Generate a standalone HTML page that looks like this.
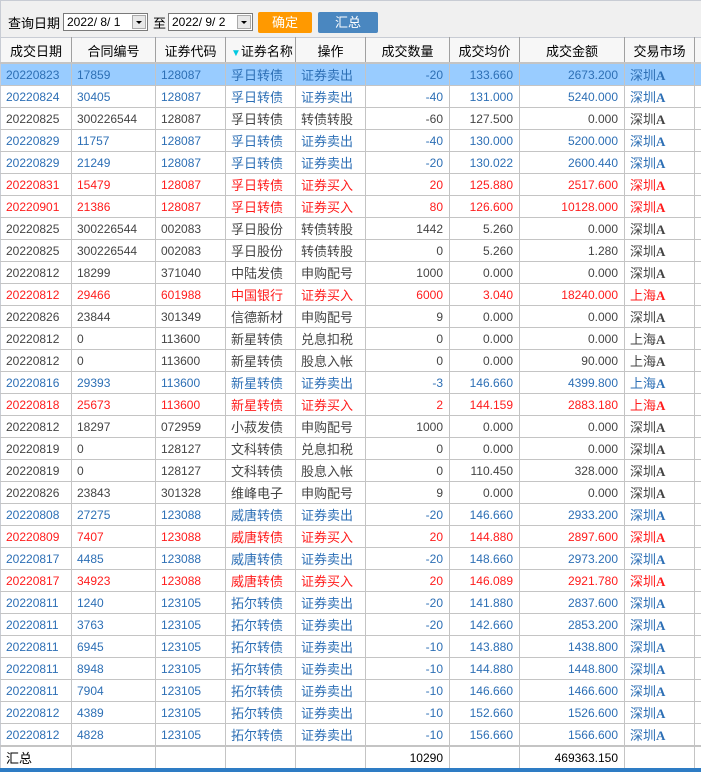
<!DOCTYPE html>
<html><head><meta charset="utf-8"><style>
body{margin:0;width:701px;height:772px;overflow:hidden;background:#fff;font-family:"Liberation Sans","Noto Sans CJK SC",sans-serif;position:relative}
.top{position:absolute;left:0;top:0;width:701px;height:37px;background:#f0f0f0;border-top:1px solid #c8ccd4;border-left:1px solid #c8ccd4;box-sizing:border-box}
.lbl{position:absolute;top:12px;font-size:13px;color:#000}
.combo{position:absolute;top:12px;height:18px;width:85px;border:1px solid #7a7a7a;background:#fff;box-sizing:border-box;font-size:12px;line-height:16px;padding-left:3px;color:#000}
.combo b{position:absolute;right:1px;top:1px;width:14px;height:14px;background:#e8e8e8;border:1px solid #aaa;box-sizing:border-box}
.combo b:after{content:"";position:absolute;left:3px;top:5px;border-left:3px solid transparent;border-right:3px solid transparent;border-top:3px solid #000}
.btn{position:absolute;top:11px;height:21px;color:#fff;font-size:13px;text-align:center;line-height:21px;border-radius:2px}
table{position:absolute;left:0;top:37px;border-collapse:collapse;table-layout:fixed;width:701px}
td,th{height:21px;border:1px solid #c4c4c4;padding:0 5px;white-space:nowrap;overflow:hidden;font-size:12px;font-weight:normal}
th{height:24px;background:#f7f7f7;font-size:13px;color:#000;border-color:#a0a0a0;border-top:1px solid #c8ccd4;border-bottom:2px solid #c4c4c4}
td.c{font-size:13px}
td.r{text-align:right;padding-right:6px}
tr.b td{color:#2d6fb5}tr.k td{color:#444}tr.d td{color:#ff1c1c}
tr.s td{background:#99ccff}
td:first-child,th:first-child{border-left:1px solid #c8ccd4}
.m b{font-family:"Liberation Serif",serif;font-weight:bold}
.bot{position:absolute;left:0;top:768px;width:701px;height:4px;background:#2e7cc4}
</style></head><body>
<div class="top">
<span class="lbl" style="left:7px">查询日期</span>
<div class="combo" style="left:62px">2022/ 8/ 1<b></b></div>
<span class="lbl" style="left:152px">至</span>
<div class="combo" style="left:167px">2022/ 9/ 2<b></b></div>
<div class="btn" style="left:257px;width:54px;background:#ff9900">确定</div>
<div class="btn" style="left:317px;width:60px;background:#4a87c0">汇总</div>
</div>
<table>
<colgroup><col style="width:71px"><col style="width:84px"><col style="width:70px"><col style="width:70px"><col style="width:70px"><col style="width:84px"><col style="width:70px"><col style="width:105px"><col style="width:70px"><col style="width:7px"></colgroup>
<tr><th>成交日期</th><th>合同编号</th><th>证券代码</th><th><span style="color:#00c8e0;font-size:10px">▼</span>证券名称</th><th>操作</th><th>成交数量</th><th>成交均价</th><th>成交金额</th><th>交易市场</th><th></th></tr>
<tr class="b s"><td>20220823</td><td>17859</td><td>128087</td><td class="c">孚日转债</td><td class="c">证券卖出</td><td class="r">-20</td><td class="r">133.660</td><td class="r">2673.200</td><td class="c m">深圳<b>A</b></td><td></td></tr>
<tr class="b"><td>20220824</td><td>30405</td><td>128087</td><td class="c">孚日转债</td><td class="c">证券卖出</td><td class="r">-40</td><td class="r">131.000</td><td class="r">5240.000</td><td class="c m">深圳<b>A</b></td><td></td></tr>
<tr class="k"><td>20220825</td><td>300226544</td><td>128087</td><td class="c">孚日转债</td><td class="c">转债转股</td><td class="r">-60</td><td class="r">127.500</td><td class="r">0.000</td><td class="c m">深圳<b>A</b></td><td></td></tr>
<tr class="b"><td>20220829</td><td>11757</td><td>128087</td><td class="c">孚日转债</td><td class="c">证券卖出</td><td class="r">-40</td><td class="r">130.000</td><td class="r">5200.000</td><td class="c m">深圳<b>A</b></td><td></td></tr>
<tr class="b"><td>20220829</td><td>21249</td><td>128087</td><td class="c">孚日转债</td><td class="c">证券卖出</td><td class="r">-20</td><td class="r">130.022</td><td class="r">2600.440</td><td class="c m">深圳<b>A</b></td><td></td></tr>
<tr class="d"><td>20220831</td><td>15479</td><td>128087</td><td class="c">孚日转债</td><td class="c">证券买入</td><td class="r">20</td><td class="r">125.880</td><td class="r">2517.600</td><td class="c m">深圳<b>A</b></td><td></td></tr>
<tr class="d"><td>20220901</td><td>21386</td><td>128087</td><td class="c">孚日转债</td><td class="c">证券买入</td><td class="r">80</td><td class="r">126.600</td><td class="r">10128.000</td><td class="c m">深圳<b>A</b></td><td></td></tr>
<tr class="k"><td>20220825</td><td>300226544</td><td>002083</td><td class="c">孚日股份</td><td class="c">转债转股</td><td class="r">1442</td><td class="r">5.260</td><td class="r">0.000</td><td class="c m">深圳<b>A</b></td><td></td></tr>
<tr class="k"><td>20220825</td><td>300226544</td><td>002083</td><td class="c">孚日股份</td><td class="c">转债转股</td><td class="r">0</td><td class="r">5.260</td><td class="r">1.280</td><td class="c m">深圳<b>A</b></td><td></td></tr>
<tr class="k"><td>20220812</td><td>18299</td><td>371040</td><td class="c">中陆发债</td><td class="c">申购配号</td><td class="r">1000</td><td class="r">0.000</td><td class="r">0.000</td><td class="c m">深圳<b>A</b></td><td></td></tr>
<tr class="d"><td>20220812</td><td>29466</td><td>601988</td><td class="c">中国银行</td><td class="c">证券买入</td><td class="r">6000</td><td class="r">3.040</td><td class="r">18240.000</td><td class="c m">上海<b>A</b></td><td></td></tr>
<tr class="k"><td>20220826</td><td>23844</td><td>301349</td><td class="c">信德新材</td><td class="c">申购配号</td><td class="r">9</td><td class="r">0.000</td><td class="r">0.000</td><td class="c m">深圳<b>A</b></td><td></td></tr>
<tr class="k"><td>20220812</td><td>0</td><td>113600</td><td class="c">新星转债</td><td class="c">兑息扣税</td><td class="r">0</td><td class="r">0.000</td><td class="r">0.000</td><td class="c m">上海<b>A</b></td><td></td></tr>
<tr class="k"><td>20220812</td><td>0</td><td>113600</td><td class="c">新星转债</td><td class="c">股息入帐</td><td class="r">0</td><td class="r">0.000</td><td class="r">90.000</td><td class="c m">上海<b>A</b></td><td></td></tr>
<tr class="b"><td>20220816</td><td>29393</td><td>113600</td><td class="c">新星转债</td><td class="c">证券卖出</td><td class="r">-3</td><td class="r">146.660</td><td class="r">4399.800</td><td class="c m">上海<b>A</b></td><td></td></tr>
<tr class="d"><td>20220818</td><td>25673</td><td>113600</td><td class="c">新星转债</td><td class="c">证券买入</td><td class="r">2</td><td class="r">144.159</td><td class="r">2883.180</td><td class="c m">上海<b>A</b></td><td></td></tr>
<tr class="k"><td>20220812</td><td>18297</td><td>072959</td><td class="c">小菽发债</td><td class="c">申购配号</td><td class="r">1000</td><td class="r">0.000</td><td class="r">0.000</td><td class="c m">深圳<b>A</b></td><td></td></tr>
<tr class="k"><td>20220819</td><td>0</td><td>128127</td><td class="c">文科转债</td><td class="c">兑息扣税</td><td class="r">0</td><td class="r">0.000</td><td class="r">0.000</td><td class="c m">深圳<b>A</b></td><td></td></tr>
<tr class="k"><td>20220819</td><td>0</td><td>128127</td><td class="c">文科转债</td><td class="c">股息入帐</td><td class="r">0</td><td class="r">110.450</td><td class="r">328.000</td><td class="c m">深圳<b>A</b></td><td></td></tr>
<tr class="k"><td>20220826</td><td>23843</td><td>301328</td><td class="c">维峰电子</td><td class="c">申购配号</td><td class="r">9</td><td class="r">0.000</td><td class="r">0.000</td><td class="c m">深圳<b>A</b></td><td></td></tr>
<tr class="b"><td>20220808</td><td>27275</td><td>123088</td><td class="c">威唐转债</td><td class="c">证券卖出</td><td class="r">-20</td><td class="r">146.660</td><td class="r">2933.200</td><td class="c m">深圳<b>A</b></td><td></td></tr>
<tr class="d"><td>20220809</td><td>7407</td><td>123088</td><td class="c">威唐转债</td><td class="c">证券买入</td><td class="r">20</td><td class="r">144.880</td><td class="r">2897.600</td><td class="c m">深圳<b>A</b></td><td></td></tr>
<tr class="b"><td>20220817</td><td>4485</td><td>123088</td><td class="c">威唐转债</td><td class="c">证券卖出</td><td class="r">-20</td><td class="r">148.660</td><td class="r">2973.200</td><td class="c m">深圳<b>A</b></td><td></td></tr>
<tr class="d"><td>20220817</td><td>34923</td><td>123088</td><td class="c">威唐转债</td><td class="c">证券买入</td><td class="r">20</td><td class="r">146.089</td><td class="r">2921.780</td><td class="c m">深圳<b>A</b></td><td></td></tr>
<tr class="b"><td>20220811</td><td>1240</td><td>123105</td><td class="c">拓尔转债</td><td class="c">证券卖出</td><td class="r">-20</td><td class="r">141.880</td><td class="r">2837.600</td><td class="c m">深圳<b>A</b></td><td></td></tr>
<tr class="b"><td>20220811</td><td>3763</td><td>123105</td><td class="c">拓尔转债</td><td class="c">证券卖出</td><td class="r">-20</td><td class="r">142.660</td><td class="r">2853.200</td><td class="c m">深圳<b>A</b></td><td></td></tr>
<tr class="b"><td>20220811</td><td>6945</td><td>123105</td><td class="c">拓尔转债</td><td class="c">证券卖出</td><td class="r">-10</td><td class="r">143.880</td><td class="r">1438.800</td><td class="c m">深圳<b>A</b></td><td></td></tr>
<tr class="b"><td>20220811</td><td>8948</td><td>123105</td><td class="c">拓尔转债</td><td class="c">证券卖出</td><td class="r">-10</td><td class="r">144.880</td><td class="r">1448.800</td><td class="c m">深圳<b>A</b></td><td></td></tr>
<tr class="b"><td>20220811</td><td>7904</td><td>123105</td><td class="c">拓尔转债</td><td class="c">证券卖出</td><td class="r">-10</td><td class="r">146.660</td><td class="r">1466.600</td><td class="c m">深圳<b>A</b></td><td></td></tr>
<tr class="b"><td>20220812</td><td>4389</td><td>123105</td><td class="c">拓尔转债</td><td class="c">证券卖出</td><td class="r">-10</td><td class="r">152.660</td><td class="r">1526.600</td><td class="c m">深圳<b>A</b></td><td></td></tr>
<tr class="b"><td>20220812</td><td>4828</td><td>123105</td><td class="c">拓尔转债</td><td class="c">证券卖出</td><td class="r">-10</td><td class="r">156.660</td><td class="r">1566.600</td><td class="c m">深圳<b>A</b></td><td></td></tr>
<tr style="border-top:2px solid #c4c4c4"><td class="c" style="color:#000">汇总</td><td></td><td></td><td></td><td></td><td class="r" style="color:#000">10290</td><td></td><td class="r" style="color:#000">469363.150</td><td></td><td></td></tr>
</table>
<div class="bot"></div>
</body></html>
